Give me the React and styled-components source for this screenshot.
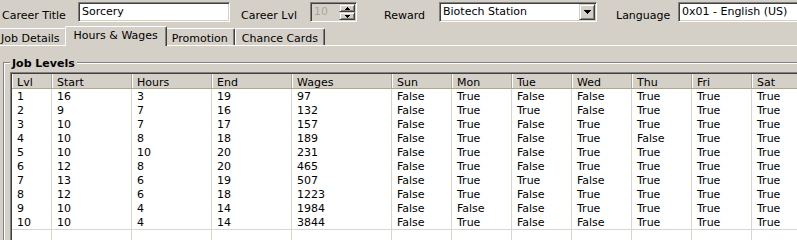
import React from "react";
import styled, { createGlobalStyle } from "styled-components";

const GlobalStyle = createGlobalStyle`
  html, body { margin: 0; padding: 0; background: #d4d0c8; }
  body { font-family: "DejaVu Sans", Verdana, sans-serif; font-size: 11px; color: #000; }
  * { box-sizing: border-box; }
`;

const Page = styled.div`
  width: 797px;
  height: 240px;
  overflow: hidden;
  background: #d4d0c8;
`;

const Toolbar = styled.div`
  display: flex;
  align-items: center;
  height: 24px;
  padding-left: 2px;
  white-space: nowrap;
`;

const Label = styled.span`
  flex: none;
  width: ${(p) => p.$w}px;
  margin-left: ${(p) => p.$ml || 0}px;
  padding-top: 7px;
  line-height: 13px;
`;

const Sunken = styled.div`
  flex: none;
  position: relative;
  display: flex;
  align-items: center;
  width: ${(p) => p.$w}px;
  height: 20px;
  background: ${(p) => (p.$disabled ? "#d4d0c8" : "#fff")};
  color: ${(p) => (p.$disabled ? "#aca899" : "#000")};
  border-top: 1px solid #808080;
  border-left: 1px solid #808080;
  border-right: 1px solid #fff;
  border-bottom: 1px solid #fff;
  box-shadow: inset 1px 1px 0 #404040, inset -1px -1px 0 #d4d0c8;
  padding-left: 3px;
  line-height: 13px;
`;

const Value = styled.span`
  flex: 1;
  overflow: hidden;
  white-space: nowrap;
  padding-bottom: 1px;
`;

const Raised = styled.div`
  flex: none;
  display: flex;
  align-items: center;
  justify-content: center;
  width: 16px;
  height: ${(p) => p.$h}px;
  background: #d4d0c8;
  border-top: 1px solid #d4d0c8;
  border-left: 1px solid #d4d0c8;
  border-right: 1px solid #404040;
  border-bottom: 1px solid #404040;
  box-shadow: inset 1px 1px 0 #fff, inset -1px -1px 0 #808080;
`;

const SpinStack = styled.div`
  display: flex;
  flex-direction: column;
  margin-right: 1px;
`;

const ComboButtonSlot = styled.div`
  margin-right: 1px;
`;

const Arrow = () => (
  <svg width="7" height="4" viewBox="0 0 7 4" style={{ display: "block" }}>
    <path d="M0 0h7v1H6v1H5v1H4v1H3V3H2V2H1V1H0z" fill="#000" />
  </svg>
);

const SmallArrow = ({ up }) => (
  <svg width="5" height="3" viewBox="0 0 5 3" style={{ display: "block" }}>
    {up ? (
      <path d="M2 0h1v1h1v1h1v1H0V2h1V1h1z" fill="#000" />
    ) : (
      <path d="M0 0h5v1H4v1H3v1H2V2H1V1H0z" fill="#000" />
    )}
  </svg>
);

const TabStrip = styled.div`
  display: flex;
  align-items: flex-end;
  height: 21px;
  margin-left: -6px;
  white-space: nowrap;
`;

const Tab = styled.div`
  position: relative;
  z-index: ${(p) => (p.$active ? 2 : 1)};
  flex: none;
  height: ${(p) => (p.$active ? 20 : 17)}px;
  margin: 0 ${(p) => (p.$active ? -2 : 0)}px ${(p) => (p.$active ? -1 : 0)}px;
  padding: ${(p) => (p.$active ? "2px 8px 0" : "3px 6px 0")};
  line-height: 13px;
  background: #d4d0c8;
  border-top: 1px solid #fff;
  border-left: 1px solid #fff;
  border-right: 1px solid #404040;
  border-radius: 2px 2px 0 0;
  box-shadow: inset -1px 0 0 #808080;
`;

const Panel = styled.div`
  border-top: 1px solid #fff;
  padding: 16px 0 0 3px;
`;

const GroupBox = styled.div`
  position: relative;
  width: 900px;
  border-top: 1px solid #808080;
  border-left: 1px solid #808080;
  box-shadow: inset 1px 1px 0 #fff;
  padding: 9px 0 0 6px;
`;

const Legend = styled.span`
  position: absolute;
  left: 6px;
  top: -6px;
  padding: 0 2px;
  background: #d4d0c8;
  font-weight: bold;
  line-height: 13px;
`;

const Table = styled.div`
  display: grid;
  grid-template-columns: 40px 80px 80px 80px 100px repeat(7, 60px);
  width: max-content;
  background: #fff;
  border-top: 1px solid #808080;
  border-left: 1px solid #808080;
  box-shadow: inset 1px 1px 0 #404040;
  padding: 1px 0 0 1px;
`;

const HeadCell = styled.div`
  height: 15px;
  line-height: 13px;
  padding: 2px 0 0 5px;
  background: #d4d0c8;
  border-right: 1px solid #aca899;
  border-bottom: 1px solid #aca899;
  box-shadow: inset 1px 0 0 #fff;
  white-space: nowrap;
`;

const Cell = styled.div`
  height: ${(p) => (p.$blank ? 12 : 14)}px;
  line-height: 13px;
  padding: 1px 0 0 5px;
  border-right: 1px solid #ddd6c6;
  border-top: ${(p) => (p.$blank ? "1px solid #ddd6c6" : "none")};
  white-space: nowrap;
`;

const columns = ["Lvl", "Start", "Hours", "End", "Wages", "Sun", "Mon", "Tue", "Wed", "Thu", "Fri", "Sat"];

const F = "False";
const T = "True";
const rows = [
  [1, 16, 3, 19, 97, F, T, F, F, T, T, T],
  [2, 9, 7, 16, 132, F, T, T, F, T, T, T],
  [3, 10, 7, 17, 157, F, T, F, T, T, T, T],
  [4, 10, 8, 18, 189, F, T, F, T, F, T, T],
  [5, 10, 10, 20, 231, F, T, F, T, T, T, T],
  [6, 12, 8, 20, 465, F, T, F, T, T, T, T],
  [7, 13, 6, 19, 507, F, T, T, F, T, T, T],
  [8, 12, 6, 18, 1223, F, T, F, T, T, T, T],
  [9, 10, 4, 14, 1984, F, F, F, T, T, T, T],
  [10, 10, 4, 14, 3844, F, T, F, F, T, T, T],
];

const tabs = ["Job Details", "Hours & Wages", "Promotion", "Chance Cards"];

export default function App() {
  return (
    <Page>
      <GlobalStyle />
      <Toolbar>
        <Label $w={76}>Career Title</Label>
        <Sunken $w={152}>
          <Value>Sorcery</Value>
        </Sunken>
        <Label $w={69} $ml={11}>Career Lvl</Label>
        <Sunken $w={47} $disabled>
          <Value>10</Value>
          <SpinStack>
            <Raised $h={8}><SmallArrow up /></Raised>
            <Raised $h={8}><SmallArrow /></Raised>
          </SpinStack>
        </Sunken>
        <Label $w={55} $ml={27}>Reward</Label>
        <Sunken $w={158}>
          <Value>Biotech Station</Value>
          <ComboButtonSlot>
            <Raised $h={16}><Arrow /></Raised>
          </ComboButtonSlot>
        </Sunken>
        <Label $w={62} $ml={19}>Language</Label>
        <Sunken $w={140}>
          <Value>0x01 - English (US)</Value>
        </Sunken>
      </Toolbar>
      <TabStrip>
        {tabs.map((t, i) => (
          <Tab key={t} $active={i === 1}>{t}</Tab>
        ))}
      </TabStrip>
      <Panel>
        <GroupBox>
          <Legend>Job Levels</Legend>
          <Table>
            {columns.map((c) => (
              <HeadCell key={c}>{c}</HeadCell>
            ))}
            {rows.map((r) =>
              r.map((v, j) => <Cell key={`${r[0]}-${j}`}>{v}</Cell>)
            )}
            {columns.map((c) => (
              <Cell key={`blank-${c}`} $blank />
            ))}
          </Table>
        </GroupBox>
      </Panel>
    </Page>
  );
}
